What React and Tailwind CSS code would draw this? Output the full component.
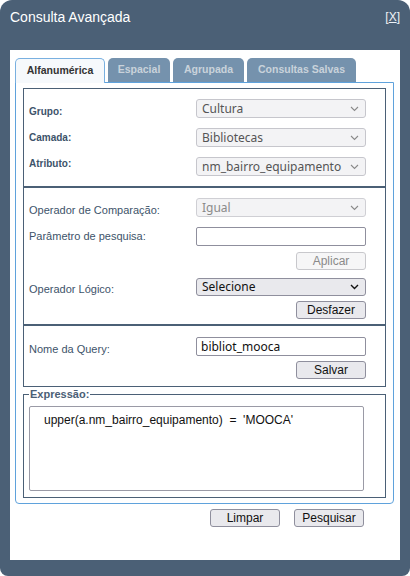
import React from "react"

function Chevron({ dark }) {
  return (
    <svg width="9" height="6" viewBox="0 0 9 6" className="shrink-0">
      <polyline
        points="1,1 4.5,4.5 8,1"
        fill="none"
        stroke={dark ? "#111" : "#8a8a8a"}
        strokeWidth={dark ? "1.4" : "1.1"}
      />
    </svg>
  )
}

function Select({ value, variant = "light", h = "h-[19px]" }) {
  const styles = {
    light: "bg-[#f3f3f5] border-[#c6c6cc] text-[#555]",
    disabled: "bg-[#f3f3f5] border-[#cfcfd4] text-[#8a8a8a]",
    active: "bg-[#e9e9ed] border-[#8f8f9d] text-[#111]",
  }
  return (
    <div
      className={`w-[170px] ${h} border rounded-[3px] flex items-center justify-between pl-[5px] pr-[6px] text-[12px] font-normal font-['Noto_Sans',sans-serif] ${styles[variant]}`}
    >
      <span className="leading-none">{value}</span>
      <Chevron dark={variant === "active"} />
    </div>
  )
}

function Input({ value = "" }) {
  return (
    <div className="w-[170px] h-[19px] border border-[#8f8f9d] rounded-[2px] bg-white flex items-center px-[4px] text-[12px] font-normal text-[#111] font-['Noto_Sans',sans-serif]">
      <span className="leading-none">{value}</span>
    </div>
  )
}

function Button({ children, disabled, className = "" }) {
  return (
    <div
      className={`w-[70px] h-[18px] border rounded-[3px] flex items-center justify-center text-[12px] font-normal leading-none ${
        disabled
          ? "bg-[#f6f6f7] border-[#c8c8cc] text-[#8a8a8a]"
          : "bg-[#e9e9ed] border-[#8f8f9d] text-[#111]"
      } ${className}`}
    >
      {children}
    </div>
  )
}

const tabs = [
  { name: "Espacial", w: "w-[62px]" },
  { name: "Agrupada", w: "w-[71px]" },
  { name: "Consultas Salvas", w: "w-[109px]" },
]

export default function App() {
  return (
    <div className="w-[410px] h-[576px] bg-[#4b6076] rounded-t-[12px] rounded-b-[8px] flex flex-col font-['Liberation_Sans',Arial,sans-serif] overflow-hidden">
      <div className="h-[50px] flex justify-between items-start pl-[10px] pr-[10px] pt-[8px] text-white">
        <span className="text-[14px] leading-[18px]">Consulta Avançada</span>
        <span className="text-[12px] leading-[18px] text-[#eef2f6]">
          [<span className="underline">X</span>]
        </span>
      </div>

      <div className="mx-[10px] h-[510px] bg-white pt-[8px] pl-[5px] pr-[6px]">
        {/* tabs */}
        <div className="flex items-end gap-[3px] h-[24px] relative z-10">
          <div className="w-[90px] h-[25px] -mb-px border border-b-0 border-[#79b0e0] rounded-t-[5px] bg-[#f6f9fc] flex items-center justify-center text-[10.5px] font-bold text-[#333]">
            Alfanumérica
          </div>
          {tabs.map((t) => (
            <div
              key={t.name}
              className={`${t.w} h-[24px] bg-[#7592ad] rounded-t-[5px] flex items-center justify-center text-[10.5px] font-bold text-[#c9d2db]`}
            >
              {t.name}
            </div>
          ))}
        </div>

        {/* panel */}
        <div className="border border-[#5fa2dc] rounded-b-[4px] pt-[5px] pb-[5px] px-[7px]">
          {/* box 1 */}
          <div className="h-[99px] border border-[#4b6076] pl-[5px] pt-[10px] flex flex-col gap-[10px] text-[10px] leading-[12px] font-bold text-[#3d536a]">
            <div className="flex items-center">
              <span className="w-[167px] pt-[6px]">Grupo:</span>
              <Select value="Cultura" />
            </div>
            <div className="flex items-center">
              <span className="w-[167px]">Camada:</span>
              <Select value="Bibliotecas" />
            </div>
            <div className="flex items-center">
              <span className="w-[167px] pb-[6px]">Atributo:</span>
              <Select value="nm_bairro_equipamento" />
            </div>
          </div>

          {/* box 2 */}
          <div className="h-[138px] border border-[#4b6076] pl-[5px] pt-[10px] flex flex-col text-[11px] leading-[13px] text-[#3d536a]">
            <div className="flex items-center">
              <span className="w-[167px] pt-[5px]">Operador de Comparação:</span>
              <Select value="Igual" variant="disabled" />
            </div>
            <div className="flex items-center mt-[10px]">
              <span className="w-[167px]">Parâmetro de pesquisa:</span>
              <Input />
            </div>
            <div className="flex mt-[6px] pl-[267px]">
              <Button disabled className="h-[17px]">Aplicar</Button>
            </div>
            <div className="flex items-center mt-[8px]">
              <span className="w-[167px] pt-[5px]">Operador Lógico:</span>
              <Select value="Selecione" variant="active" h="h-[18px]" />
            </div>
            <div className="flex mt-[5px] pl-[267px]">
              <Button>Desfazer</Button>
            </div>
          </div>

          {/* box 3 */}
          <div className="h-[62px] border border-[#4b6076] pl-[5px] pt-[11px] flex flex-col text-[11px] leading-[13px] text-[#3d536a]">
            <div className="flex items-center">
              <span className="w-[167px] pt-[6px]">Nome da Query:</span>
              <Input value="bibliot_mooca" />
            </div>
            <div className="flex mt-[5px] pl-[267px]">
              <Button>Salvar</Button>
            </div>
          </div>

          {/* expressão */}
          <fieldset className="border border-[#4b6076] pl-[5px] pb-[6px]">
            <legend className="ml-0 px-px text-[11px] leading-[14px] font-bold text-[#4b6076]">
              Expressão:
            </legend>
            <div className="mt-[5px] w-[335px] h-[85px] border border-[#9a9aa6] rounded-[2px] bg-white pl-[14px] pt-[4px] text-[12px] text-[#111] whitespace-pre">
              {"upper(a.nm_bairro_equipamento)  =  'MOOCA'"}
            </div>
          </fieldset>
        </div>

        {/* footer buttons */}
        <div className="flex justify-end gap-[14px] mt-[5px] pr-[30px]">
          <Button>Limpar</Button>
          <Button>Pesquisar</Button>
        </div>
      </div>
    </div>
  )
}
